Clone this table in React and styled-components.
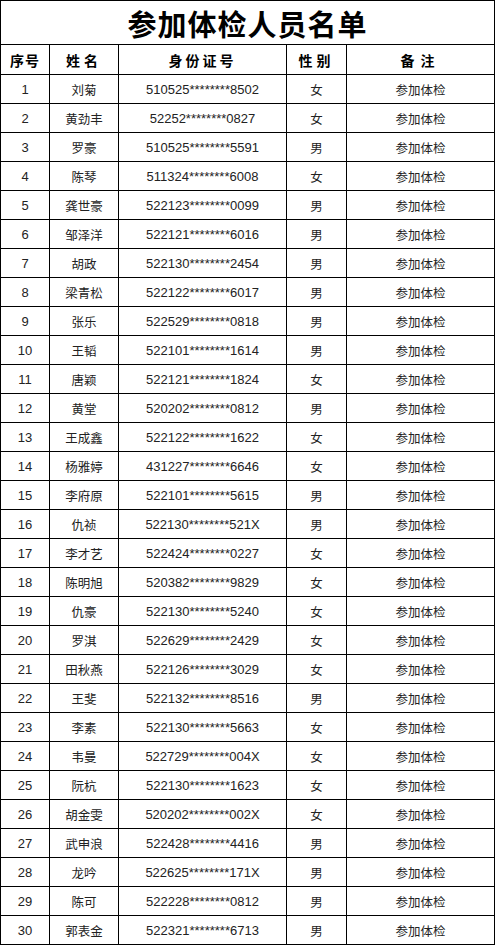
import styled, { createGlobalStyle } from 'styled-components'

const GlobalStyle = createGlobalStyle`
  html, body {
    margin: 0;
    padding: 0;
    background: #fff;
  }
  body {
    font-family: "Liberation Sans", "Noto Sans CJK SC", sans-serif;
  }
`

const Table = styled.table`
  width: 494px;
  border-collapse: collapse;
  table-layout: fixed;
  color: #1a1a1a;
`

const TitleCell = styled.th`
  height: 43px;
  border: 1px solid #000;
  padding: 0;
  font-family: "Noto Sans CJK SC", sans-serif;
  font-size: 29px;
  font-weight: 700;
  letter-spacing: 1px;
  color: #000;
  text-align: center;
  vertical-align: middle;
`

const HeadCell = styled.th`
  height: 29px;
  border: 1px solid #000;
  padding: 0;
  font-family: "Noto Sans CJK SC", sans-serif;
  font-size: 14px;
  font-weight: 700;
  letter-spacing: ${p => p.$spread || '2px'};
  color: #000;
  text-align: center;
  vertical-align: middle;
`

const Cell = styled.td`
  height: 28px;
  border: 1px solid #000;
  padding: 0;
  font-family: ${p => (p.$cjk ? '"Noto Sans CJK SC", sans-serif' : '"Liberation Sans", "Noto Sans CJK SC", sans-serif')};
  font-size: ${p => (p.$cjk ? '12.5px' : '13px')};
  color: #222;
  text-align: center;
  vertical-align: middle;
  white-space: nowrap;
`

const people = [
  ['刘菊', '510525********8502', '女'],
  ['黄劲丰', '52252********0827', '女'],
  ['罗豪', '510525********5591', '男'],
  ['陈琴', '511324********6008', '女'],
  ['龚世豪', '522123********0099', '男'],
  ['邹泽洋', '522121********6016', '男'],
  ['胡政', '522130********2454', '男'],
  ['梁青松', '522122********6017', '男'],
  ['张乐', '522529********0818', '男'],
  ['王韬', '522101********1614', '男'],
  ['唐颖', '522121********1824', '女'],
  ['黄堂', '520202********0812', '男'],
  ['王成鑫', '522122********1622', '女'],
  ['杨雅婷', '431227********6646', '女'],
  ['李府原', '522101********5615', '男'],
  ['仇祯', '522130********521X', '男'],
  ['李才艺', '522424********0227', '女'],
  ['陈明旭', '520382********9829', '女'],
  ['仇豪', '522130********5240', '女'],
  ['罗淇', '522629********2429', '女'],
  ['田秋燕', '522126********3029', '女'],
  ['王斐', '522132********8516', '男'],
  ['李素', '522130********5663', '女'],
  ['韦曼', '522729********004X', '女'],
  ['阮杭', '522130********1623', '女'],
  ['胡金雯', '520202********002X', '女'],
  ['武申浪', '522428********4416', '男'],
  ['龙吟', '522625********171X', '男'],
  ['陈可', '522228********0812', '男'],
  ['郭表金', '522321********6713', '男'],
]

export default function App() {
  return (
    <>
      <GlobalStyle />
      <Table>
        <colgroup>
          <col style={{ width: 49 }} />
          <col style={{ width: 69 }} />
          <col style={{ width: 168 }} />
          <col style={{ width: 60 }} />
          <col style={{ width: 148 }} />
        </colgroup>
        <thead>
          <tr>
            <TitleCell colSpan={5}>参加体检人员名单</TitleCell>
          </tr>
          <tr>
            <HeadCell $spread="1px">序号</HeadCell>
            <HeadCell $spread="4px">姓名</HeadCell>
            <HeadCell $spread="3px">身份证号</HeadCell>
            <HeadCell $spread="4px">性别</HeadCell>
            <HeadCell $spread="6px">备注</HeadCell>
          </tr>
        </thead>
        <tbody>
          {people.map(([name, id, sex], i) => (
            <tr key={id}>
              <Cell>{i + 1}</Cell>
              <Cell $cjk>{name}</Cell>
              <Cell>{id}</Cell>
              <Cell $cjk>{sex}</Cell>
              <Cell $cjk>参加体检</Cell>
            </tr>
          ))}
        </tbody>
      </Table>
    </>
  )
}
